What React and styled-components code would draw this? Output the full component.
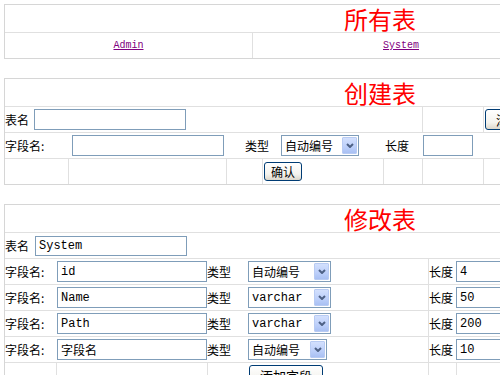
import React from 'react';
import styled, { createGlobalStyle } from 'styled-components';

const GlobalStyle = createGlobalStyle`
    html, body {
        margin: 0;
        padding: 0;
        background: #ffffff;
        overflow: hidden;
    }
    body {
        padding: 4px;
        font-family: "Liberation Sans", "Noto Sans CJK SC", sans-serif;
        font-size: 12px;
        color: #000;
    }
`;

const Page = styled.div`
    display: flex;
    flex-direction: column;
    gap: 19px;
`;

const Table = styled.div`
    width: 750px;
    border: 1px solid #d6d6d6;
    display: flex;
    flex-direction: column;
`;

const Title = styled.div`
    height: 27px;
    display: flex;
    align-items: center;
    justify-content: center;
    color: #ff0000;
    font-family: "Noto Sans CJK SC", sans-serif;
    font-size: 24px;
    line-height: 1;
`;

const Row = styled.div`
    display: grid;
    grid-template-columns: ${p => p.$cols};
    height: 25px;
    border-top: 1px solid #e0e0e0;
`;

const Cell = styled.div`
    display: flex;
    align-items: center;
    justify-content: ${p => (p.$center ? 'center' : 'flex-start')};
    gap: ${p => p.$gap || 0}px;
    padding-left: ${p => p.$pad || 0}px;
    border-left: ${p => (p.$line ? '1px solid #e0e0e0' : 'none')};
    min-width: 0;
    overflow: hidden;
    white-space: nowrap;
`;

const Label = styled.span`
    font-family: "Noto Sans CJK SC", sans-serif;
    font-size: 12px;
    line-height: 1;
`;

const Link = styled.a`
    font-family: "Liberation Mono", monospace;
    font-size: 10px;
    color: #800080;
    text-decoration: underline;
    cursor: pointer;
`;

const Input = styled.input`
    box-sizing: border-box;
    width: ${p => p.$w}px;
    height: ${p => p.$h || 21}px;
    border: 1px solid #7f9db9;
    padding: 0 0 0 3px;
    margin: 0;
    font-family: "Liberation Mono", "Noto Sans CJK SC", monospace;
    font-size: 12px;
    color: #000;
    background: #fff;
    outline: none;
`;

const Select = styled.div`
    box-sizing: border-box;
    width: ${p => p.$w}px;
    height: 21px;
    border: 1px solid #7f9db9;
    background: #fff;
    display: flex;
    align-items: center;
    justify-content: space-between;
    padding: 0 1px 0 3px;
`;

const SelectText = styled.span`
    font-family: ${p => (p.$mono ? '"Liberation Mono", monospace' : '"Noto Sans CJK SC", sans-serif')};
    font-size: 12px;
    line-height: 1;
`;

const Arrow = styled.span`
    box-sizing: border-box;
    width: 15px;
    height: 17px;
    border: 1px solid #b8cbf3;
    border-radius: 1px;
    background: linear-gradient(180deg, #d3e0fd 0%, #bccffa 60%, #a9c0f3 100%);
    display: flex;
    align-items: center;
    justify-content: center;
`;

const Button = styled.button`
    box-sizing: border-box;
    height: ${p => p.$h || 19}px;
    padding: 0 ${p => p.$px || 6}px;
    margin: 0;
    border: 1px solid #003c74;
    border-radius: 3px;
    background: linear-gradient(180deg, #ffffff 0%, #f4f3ee 65%, #dcd7cb 100%);
    font-family: "Noto Sans CJK SC", sans-serif;
    font-size: ${p => p.$fs || 12}px;
    line-height: 1;
    color: #000;
    white-space: nowrap;
`;

const Spacer = styled.div`
    height: 12px;
`;

const Dropdown = ({ w, mono, children }) => (
    <Select $w={w}>
        <SelectText $mono={mono}>{children}</SelectText>
        <Arrow>
            <svg width="8" height="5" viewBox="0 0 8 5">
                <path d="M1 1 L4 4 L7 1" fill="none" stroke="#4d6185" strokeWidth="2" />
            </svg>
        </Arrow>
    </Select>
);

const fields = [
    { name: 'id', type: '自动编号', mono: false, w: 83, len: '4' },
    { name: 'Name', type: 'varchar', mono: true, w: 83, len: '50' },
    { name: 'Path', type: 'varchar', mono: true, w: 83, len: '200' },
    { name: '字段名', type: '自动编号', mono: false, w: 79, len: '10' },
];

const fieldCols = '51px 151px 41px 180px 28px 1fr';

const App = () => (
    <>
        <GlobalStyle />
        <Page>
            <Table>
                <Title>所有表</Title>
                <Row $cols="247px 297px 1fr">
                    <Cell $center><Link>Admin</Link></Cell>
                    <Cell $center $line><Link>System</Link></Cell>
                    <Cell $line />
                </Row>
            </Table>

            <Table>
                <Title>创建表</Title>
                <Row $cols="417px 61px 1fr">
                    <Cell $gap={5}>
                        <Label>表名</Label>
                        <Input $w={152} readOnly />
                    </Cell>
                    <Cell $line />
                    <Cell $line $pad={1}>
                        <Button $fs={13} $px={10} $h={21}>添加字段</Button>
                    </Cell>
                </Row>
                <Row $cols="67px 173px 36px 104px 38px 1fr">
                    <Cell><Label>字段名:</Label></Cell>
                    <Cell><Input $w={152} readOnly /></Cell>
                    <Cell><Label>类型</Label></Cell>
                    <Cell><Dropdown w={78}>自动编号</Dropdown></Cell>
                    <Cell><Label>长度</Label></Cell>
                    <Cell><Input $w={50} readOnly /></Cell>
                </Row>
                <Row $cols="63px 158px 36px 121px 39px 61px 1fr">
                    <Cell />
                    <Cell $line />
                    <Cell $line />
                    <Cell $line $pad={1}>
                        <Button>确认</Button>
                    </Cell>
                    <Cell $line />
                    <Cell $line />
                    <Cell $line />
                </Row>
            </Table>

            <Table>
                <Title>修改表</Title>
                <Row $cols="1fr">
                    <Cell $gap={6}>
                        <Label>表名</Label>
                        <Input $w={152} $h={20} defaultValue="System" readOnly />
                    </Cell>
                </Row>
                {fields.map(f => (
                    <Row $cols={fieldCols} key={f.len}>
                        <Cell><Label>字段名:</Label></Cell>
                        <Cell $pad={1}><Input $w={150} defaultValue={f.name} readOnly /></Cell>
                        <Cell><Label>类型</Label></Cell>
                        <Cell><Dropdown w={f.w} mono={f.mono}>{f.type}</Dropdown></Cell>
                        <Cell $line><Label>长度</Label></Cell>
                        <Cell><Input $w={60} defaultValue={f.len} readOnly /></Cell>
                    </Row>
                ))}
                <Row $cols={fieldCols}>
                    <Cell />
                    <Cell $line />
                    <Cell $line />
                    <Cell $pad={1}>
                        <Button $fs={13} $px={10} $h={21}>添加字段</Button>
                    </Cell>
                    <Cell $line />
                    <Cell $line />
                </Row>
                <Spacer />
            </Table>
        </Page>
    </>
);

export default App;
